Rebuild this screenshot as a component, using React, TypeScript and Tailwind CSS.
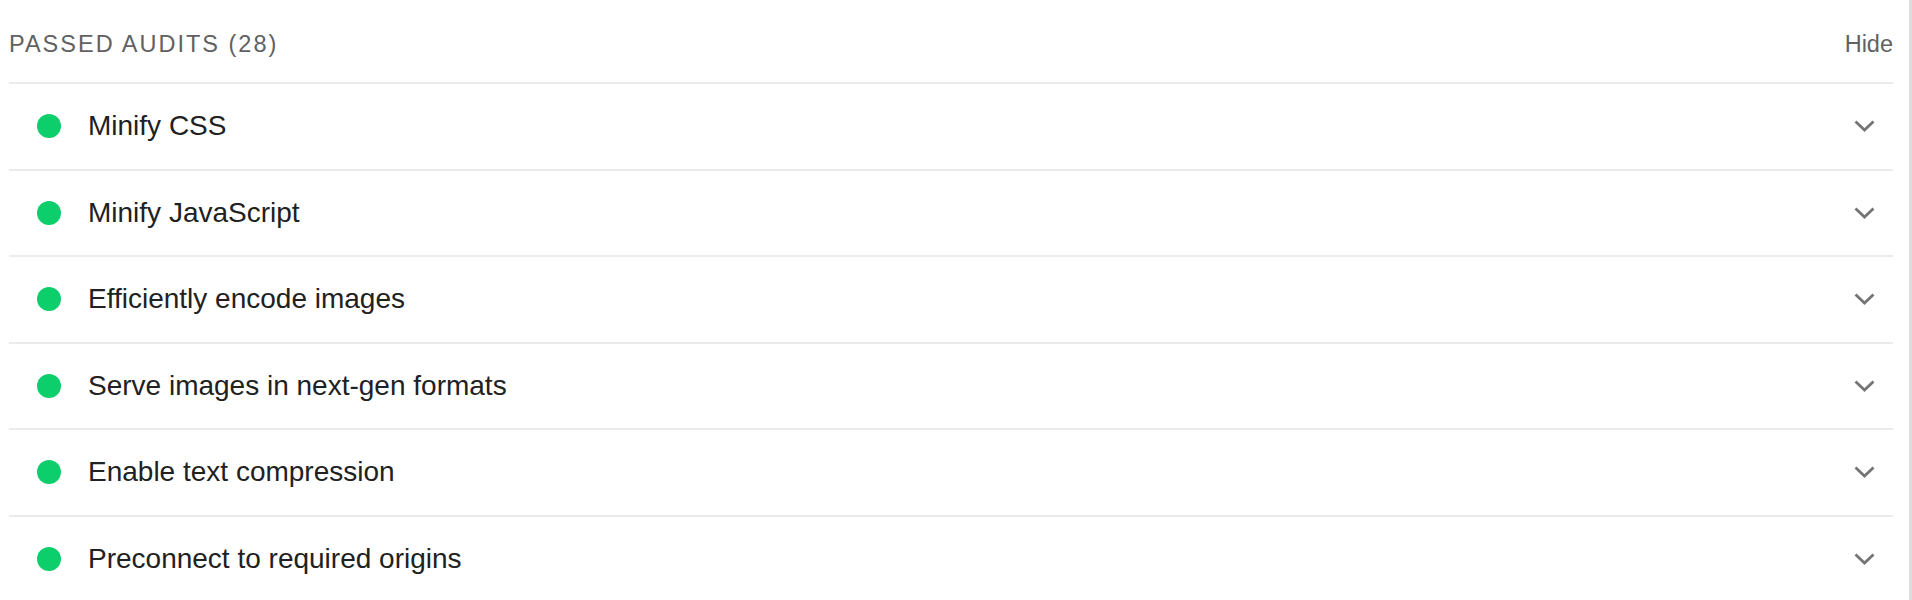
import { FC } from "react";

const audits = [
  "Minify CSS",
  "Minify JavaScript",
  "Efficiently encode images",
  "Serve images in next-gen formats",
  "Enable text compression",
  "Preconnect to required origins",
];

const Chevron: FC = () => (
  <svg width="21" height="12" viewBox="0 0 21 12" className="shrink-0">
    <polyline
      points="1.5,1.5 10.5,10 19.5,1.5"
      fill="none"
      stroke="#757575"
      strokeWidth="2.8"
    />
  </svg>
);

const AuditRow: FC<{ title: string }> = ({ title }) => (
  <div className="flex items-center h-[86.5px] border-t-2 border-[#ebebeb] pl-[28px] pr-[18px]">
    <span className="w-6 h-6 rounded-full bg-[#0cce6b] shrink-0" />
    <span className="ml-[27px] flex-1 text-[28px] text-[#212121] leading-none">
      {title}
    </span>
    <Chevron />
  </div>
);

const App: FC = () => {
  return (
    <div
      className="w-[1912px] h-[600px] overflow-hidden bg-white flex"
      style={{ fontFamily: '"Liberation Sans", Arial, sans-serif' }}
    >
      <div className="flex-1 pl-[9px] pr-[16px] border-r-[3px] border-[#dcdcdc]">
        <div className="flex items-center justify-between h-[82px] pt-[7px]">
          <span className="text-[23.5px] tracking-[2px] text-[#616161] uppercase">
            Passed audits (28)
          </span>
          <span className="text-[23.5px] text-[#616161]">Hide</span>
        </div>
        {audits.map((a) => (
          <AuditRow key={a} title={a} />
        ))}
      </div>
    </div>
  );
};

App.displayName = "App";
export default App;
